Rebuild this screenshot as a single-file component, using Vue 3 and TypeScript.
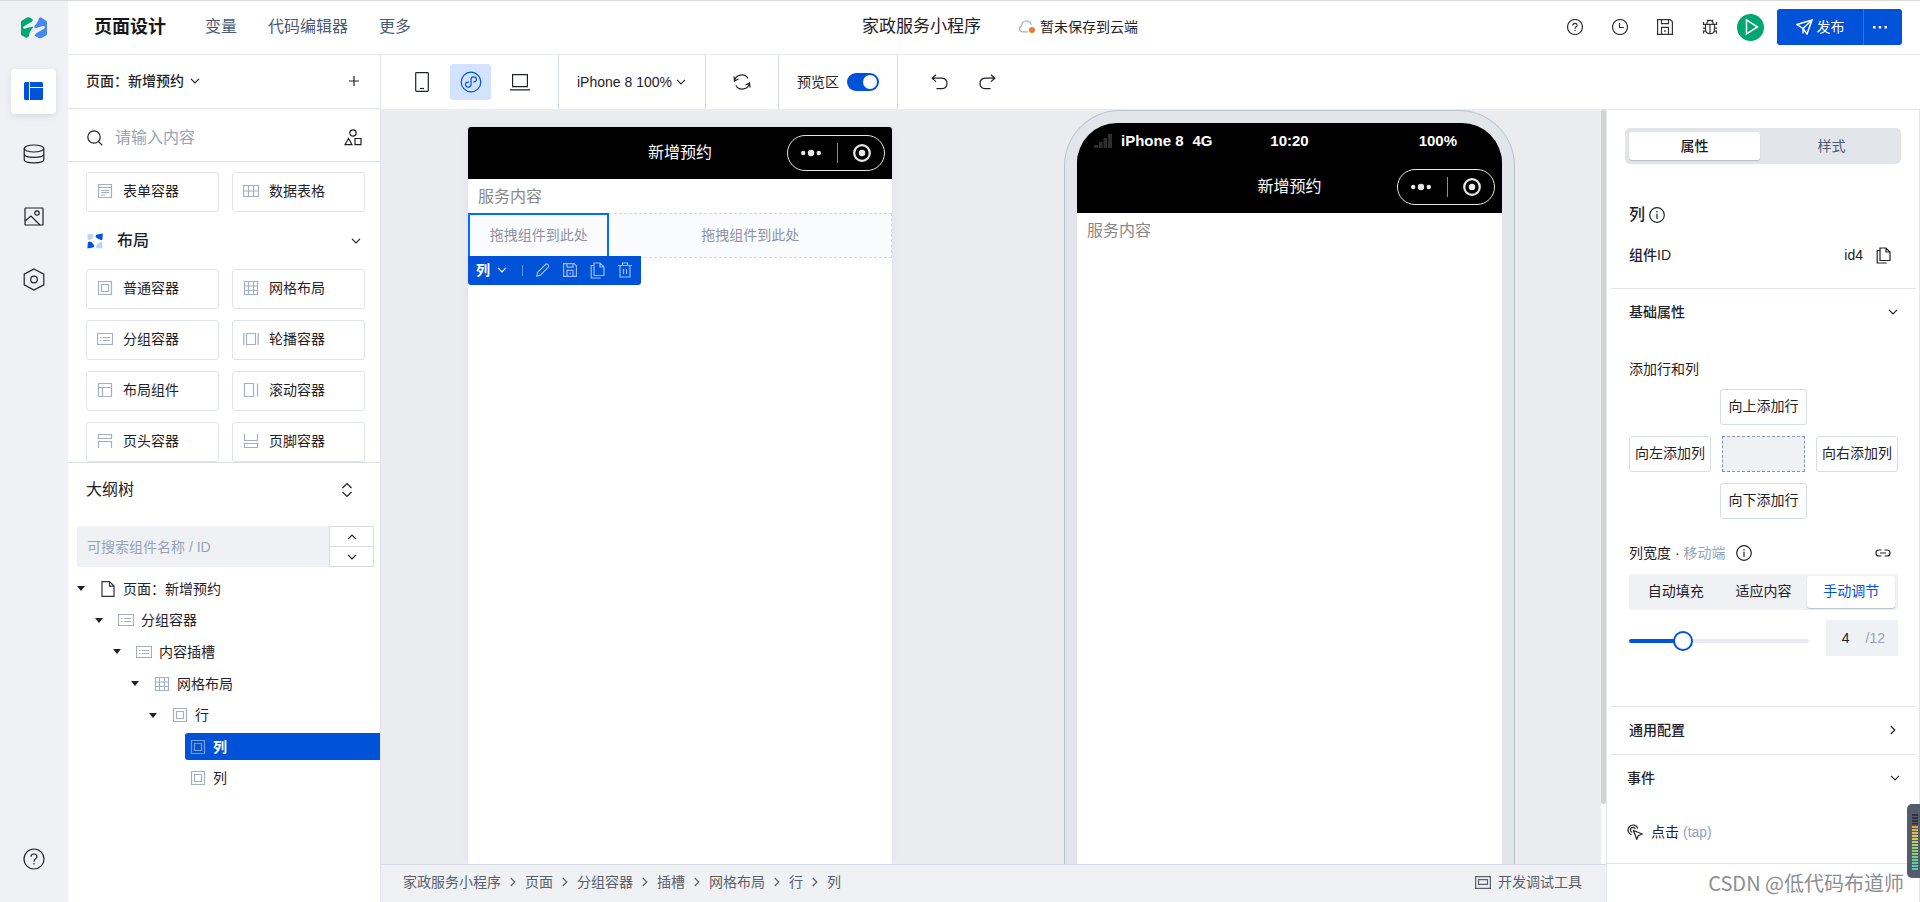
<script setup lang="ts">
import { h, ref } from 'vue'
import type { FunctionalComponent } from 'vue'

type Glyph = [width: number, height: number, body: string]

const glyphs: Record<string, Glyph> = {
  logo: [26, 22, '<g stroke="none"><path fill="#00a870" d="M0 5Q0 4 1 3.500L6 .6Q7.500-.2 9 .6L12 2.700Q12 4 9.500 5.500L3.500 9Q1.500 10.200 2.300 11.200 3.200 12 5 11.300L12 9.500C12.500 11.500 8.500 14 8.500 16.500Q8.500 18.500 6.500 20.600 5.500 21.300 4.500 20.600L1 18.500Q0 18 0 17Z"/><path fill="#4787f0" d="M13.500 9.500C14 7.500 17.500 5 17.500 2.500Q18-.2 20 .4L25 3.500Q26 4 26 5V17Q26 18 25 18.500L20.500 21Q19 21.800 17.500 21L13.500 18.500Q14 17 16.500 15.500L22.500 12Q24.500 10.500 23.700 9.500 22.800 8.500 21 9.300L13.500 11.500Z"/></g>'],
  layout: [19, 18, '<path stroke="none" fill="currentColor" d="M1.500 0H5V18H1.500Q0 18 0 16.500V1.500Q0 0 1.500 0ZM6 0H17.500Q19 0 19 1.500V5H6ZM6 6H19V16.500Q19 18 17.500 18H6Z"/>'],
  database: [22, 20, '<ellipse cx="11" cy="4.500" rx="9.800" ry="3.500"/><path d="M1.200 4.500V15.500C1.200 20 20.800 20 20.800 15.500V4.500M1.200 10C1.200 14.500 20.800 14.500 20.800 10"/>'],
  picture: [20, 19, '<rect x="1" y="1" width="18" height="17" rx=".6"/><circle cx="13" cy="6" r="2.200"/><path d="m1 14 6-5 9 9"/>'],
  hexagon: [22, 23, '<path d="m11 1 9.800 5.200v10.600L11 22 1.200 16.800V6.200Z"/><circle cx="11" cy="11.500" r="3.300"/>'],
  help: [22, 22, '<circle cx="11" cy="11" r="10"/><path d="M8 8.700Q8.200 6 11 6t3 2.600C14 10.700 11 10.700 11 13.500M11 15v1.600"/>'],
  helpSmall: [16, 16, '<circle cx="8" cy="8" r="7.500"/><path d="M5.800 6.500Q6 4.300 8 4.300t2.200 1.900C10.200 7.700 8 7.900 8 9.700M8 10.800v1.200"/>'],
  info: [16, 16, '<circle cx="8" cy="8" r="7.300"/><path d="M8 4v1.600M8 6.800V12"/>'],
  clock: [16, 16, '<circle cx="8" cy="8" r="7.500"/><path d="M7.500 4v4.500H12"/>'],
  save: [16, 16, '<path d="M.6.6h12.600l2.200 2.200v12.600H.6ZM4.500.6v4h7v-4M4.500 15.400v-7h7v7M8 11v2"/>'],
  saveLight: [14, 14, '<path d="M.6.6h10.600l2.200 2.200v10.600H.6ZM4 .6v3.500h6V.6M4 13.400v-6h6v6M7 9.500v2"/>'],
  bug: [16, 16, '<path d="M4.800 5C4.800.2 11.200.2 11.200 5M3.500 5.300h9v5.200q0 4.200-4.500 4.200t-4.500-4.200ZM8 5.500v9M1 9.200h2.500M12.500 9.200H15M1.500 3v2.300h2M14.500 3v2.300h-2M1.500 14.500v-2.300h2.300M14.500 14.500v-2.300h-2.300M5 .8l1 1M11 .8l-1 1"/>'],
  play: [14, 18, '<path stroke-width="1.500" d="M1.500 1.800V16L12.500 9Z"/>'],
  send: [17, 16, '<path stroke-width="1.500" d="M1 5.500 16 1l-5 14-4-5.500ZM16 1 7 9.500v5"/>'],
  dots: [16, 4, '<path stroke="none" fill="currentColor" d="M1 1h2.500v2.500H1ZM6.700 1h2.500v2.500H6.700ZM12.500 1H15v2.500h-2.500Z"/>'],
  cloud: [18, 14, '<path stroke="#a3afc2" stroke-width="1.200" d="M10 11.800H4A3 3 0 0 1 3.500 6Q4 1 8.500 1q4 0 4.800 4"/><circle cx="14" cy="10" r="3" fill="#ed7b2f" stroke="none"/>'],
  phone: [14, 20, '<rect x=".7" y=".7" width="12.600" height="18.600" rx=".8"/><path d="M5 16.500h4"/>'],
  mini: [22, 22, '<circle cx="11" cy="11" r="9.800"/><path d="M9 11.200C6.500 10.700 5.500 12 5.500 13.300 5.500 17.200 11 17 11 13.200V8.500C11 5 16.500 4.800 16.500 8.500 16.500 10.200 15.200 11 13.300 10.800"/>'],
  laptop: [20, 17, '<path d="M2.600.7h14.800v12H2.600ZM0 15.800h20"/>'],
  refresh: [18, 18, '<path d="M1.500 8C2.500 1 12 0 15 5.500M16.500 10C15.500 17 6 18 3 12.500M1 3.500l.5 4.500 4-2M17 14.500l-.5-4.500-4 2"/>'],
  undo: [18, 16, '<path d="M5 .8 1.200 4.200 5 7.600M1.200 4.200H11Q16 4.700 16 9.500 16 14.200 11 14.700H5.500"/>'],
  redo: [18, 16, '<path d="M13 .8l3.800 3.400L13 7.600M16.800 4.200H7Q2 4.700 2 9.500 2 14.200 7 14.700h5.500"/>'],
  down: [10, 6, '<path d="m1 .8 4 4 4-4"/>'],
  up: [10, 6, '<path d="m1 5.200 4-4 4 4"/>'],
  right: [6, 10, '<path d="m.8 1 4 4-4 4"/>'],
  sort: [12, 16, '<path d="m1.500 6 4.500-4.500L10.500 6M1.500 10 6 14.500 10.500 10"/>'],
  plus: [10, 10, '<path d="M5 0v10M0 5h10"/>'],
  search: [16, 16, '<circle cx="7" cy="7" r="6.200"/><path d="m11.500 11.500 3.800 3.800"/>'],
  shapes: [18, 17, '<circle cx="9" cy="4" r="3.200"/><path d="M4.500 9.500 1 15.700h7ZM11 9.500h6v6.200h-6Z"/>'],
  section: [16, 16, '<g stroke="none"><path fill="#bbd3fb" d="M.5 1 6 1.200Q7 1.500 6.500 2.500L5.500 5Q5 6 4 6.500L2 7Q.8 7.300.6 6ZM15.500 15.500 10 15.300Q8.500 15 9 13.800L10.500 11 13.500 8.800Q14.800 8 15 9.500Z"/><path fill="#0052d9" d="M15.800.5 15.500 6Q15.300 7.300 14 7L11.500 6Q9.500 5 8.500 3.500 8.500 2 10 1.500ZM.4 15.500.8 10Q1 8.500 2.500 8.500L4 8.800Q6.500 10.500 7.200 13 7.300 14.300 6 14.500Z"/></g>'],
  form: [16, 16, '<path d="M1.500 1.500h13v13h-13ZM1.500 4.500h13M4 7.500h8M4 9.500h8M4 12h4"/>'],
  table: [16, 16, '<path d="M.5 2.500h15v11H.5ZM.5 8h15M5.500 2.500v11M10.500 2.500v11"/>'],
  box: [16, 16, '<path d="M1.500 1.500h13v13h-13ZM4.500 4.500h7v7h-7Z"/>'],
  grid: [16, 16, '<path d="M1.500 1.500h13v13h-13ZM1.500 6h13M1.500 10.500h13M5.500 1.500v13M10.500 1.500v13"/>'],
  list: [16, 16, '<path d="M.5 2.500h15v11H.5ZM3 6.500h1.500M3 9.500h1.500M6 6.500h7M6 9.500h7"/>'],
  carousel: [16, 16, '<path d="M.8 2v12M15.200 2v12M3.500 2.500h9v11h-9Z"/>'],
  frame: [16, 16, '<path d="M1.500 1.500h13v13h-13ZM1.500 5.500h13M5.500 5.500v9"/>'],
  scroll: [16, 16, '<path d="M1.500 1.500h9v13h-9ZM14.500 1.500v13"/>'],
  header: [16, 16, '<path d="M1.500 1.500h13v4h-13ZM1.500 15V8.500h13V15"/>'],
  footer: [16, 16, '<path d="M1.500 14.500h13v-4h-13ZM1.500 1v6.500h13V1"/>'],
  page: [14, 16, '<path d="M1 .6h7.500l4.500 4.500v10.300H1ZM8.500.6v4.500H13"/>'],
  copy: [15, 17, '<path d="M4 1h6l4 4v8.500H4ZM10 1v4h4M4 3.500H1.200v12.500h9.500"/>'],
  pencil: [14, 14, '<path d="M1.500 9.500 9.500 1.500q1-1 2.200 0l.5.600q1 1 0 2.100L4.500 12.200l-3.700 1Z"/>'],
  trash: [14, 16, '<path d="M0 3.500h14M4.500 3.500v-2.500h5v2.500M2 3.500v11.500h10V3.500M5.500 7v5M8.500 7v5"/>'],
  link: [16, 8, '<path d="M6.500 1H4Q1 1 1 4t3 3h2.500M9.500 1H12q3 0 3 3t-3 3H9.500M5 4h6"/>'],
  tap: [16, 16, '<path d="M4.500 10.800A5 5 0 1 1 10.800 4.500M5.300 8.300A2.500 2.500 0 1 1 8.300 5M6.500 6.500l8.800 3.500-4 1.600L9.800 15.300Z"/>'],
  devtools: [16, 13, '<path d="M.6.6h14.800v11.800H.6ZM3.500 3.600h9v4.800h-9Z"/>'],
  caret: [8, 5, '<path fill="currentColor" stroke="none" d="M0 0h8L4 5Z"/>'],
  more: [20, 8, '<g fill="currentColor" stroke="none"><circle cx="2.200" cy="4" r="2.200"/><circle cx="10" cy="4" r="3.200"/><circle cx="17.800" cy="4" r="2.200"/></g>'],
  target: [18, 18, '<circle cx="9" cy="9" r="7.800" stroke-width="2.200"/><circle cx="9" cy="9" r="3.200" fill="currentColor" stroke="none"/>'],
  signal: [18, 14, '<path stroke="none" fill="#2e2e2e" d="M0 11h4v3H0ZM5 8h3.500v6H5ZM9.500 4H13v10H9.500ZM14 0h4v14h-4Z"/>'],
}

const Icon: FunctionalComponent<{ name: string }> = (props) => {
  const [width, height, body] = glyphs[props.name]
  return h('svg', {
    width,
    height,
    viewBox: `0 0 ${width} ${height}`,
    fill: 'none',
    stroke: 'currentColor',
    'stroke-width': 1.2,
    'aria-hidden': 'true',
    innerHTML: body,
  })
}
Icon.props = ['name']

const rail = [
  { icon: 'layout', label: '页面设计', active: true },
  { icon: 'database', label: '数据' },
  { icon: 'picture', label: '素材' },
  { icon: 'hexagon', label: '设置' },
]
const headerTools = [
  { icon: 'helpSmall', label: '帮助' },
  { icon: 'clock', label: '历史' },
  { icon: 'save', label: '保存' },
  { icon: 'bug', label: '调试' },
]
const dataComponents = [
  { icon: 'form', label: '表单容器' },
  { icon: 'table', label: '数据表格' },
]
const layoutComponents = [
  { icon: 'box', label: '普通容器' },
  { icon: 'grid', label: '网格布局' },
  { icon: 'list', label: '分组容器' },
  { icon: 'carousel', label: '轮播容器' },
  { icon: 'frame', label: '布局组件' },
  { icon: 'scroll', label: '滚动容器' },
  { icon: 'header', label: '页头容器' },
  { icon: 'footer', label: '页脚容器' },
]
const tree = [
  { icon: 'page', label: '页面：新增预约', depth: 0, open: true },
  { icon: 'list', label: '分组容器', depth: 1, open: true },
  { icon: 'list', label: '内容插槽', depth: 2, open: true },
  { icon: 'grid', label: '网格布局', depth: 3, open: true },
  { icon: 'box', label: '行', depth: 4, open: true },
  { icon: 'box', label: '列', depth: 5, selected: true },
  { icon: 'box', label: '列', depth: 5 },
]
const crumbs = ['家政服务小程序', '页面', '分组容器', '插槽', '网格布局', '行', '列']
const devices = [
  { icon: 'phone', label: '手机' },
  { icon: 'mini', label: '小程序', active: true },
  { icon: 'laptop', label: '电脑' },
]
const widthModes = ['自动填充', '适应内容', '手动调节']

const preview = ref(true)
const keyword = ref('')
const outlineKeyword = ref('')
const widthMode = ref('手动调节')
const span = ref(4)
</script>

<template>
  <div class="app">
    <nav class="rail" aria-label="主导航">
      <Icon name="logo" class="logo" />
      <button v-for="r in rail" :key="r.icon" class="rail-btn" :class="{ active: r.active }" :aria-label="r.label">
        <Icon :name="r.icon" />
      </button>
      <button class="rail-btn rail-help" aria-label="帮助"><Icon name="help" /></button>
    </nav>

    <header class="top">
      <div class="top-nav">
        <h1>页面设计</h1>
        <a href="#">变量</a>
        <a href="#">代码编辑器</a>
        <a href="#">更多</a>
      </div>
      <div class="top-center">
        <span class="app-name">家政服务小程序</span>
        <span class="save-state"><Icon name="cloud" />暂未保存到云端</span>
      </div>
      <div class="top-tools">
        <button v-for="t in headerTools" :key="t.icon" class="tool" :aria-label="t.label"><Icon :name="t.icon" /></button>
        <button class="run" aria-label="预览"><Icon name="play" /></button>
        <div class="publish">
          <button class="publish-main"><Icon name="send" />发布</button>
          <button class="publish-more" aria-label="更多操作"><Icon name="dots" /></button>
        </div>
      </div>
    </header>

    <aside class="left">
      <div class="page-row">
        <label class="picker strong">
          <select aria-label="页面"><option>页面：新增预约</option></select>
          <Icon name="down" />
        </label>
        <button aria-label="新增页面"><Icon name="plus" /></button>
      </div>
      <div class="search-row">
        <Icon name="search" />
        <input v-model="keyword" type="text" placeholder="请输入内容" aria-label="搜索组件" />
        <button aria-label="组件分类"><Icon name="shapes" /></button>
      </div>
      <div class="library">
        <div class="cards">
          <button v-for="c in dataComponents" :key="c.label" class="card"><Icon :name="c.icon" />{{ c.label }}</button>
        </div>
        <h2 class="group-head"><Icon name="section" /><span>布局</span><Icon name="down" /></h2>
        <div class="cards">
          <button v-for="c in layoutComponents" :key="c.label" class="card"><Icon :name="c.icon" />{{ c.label }}</button>
        </div>
      </div>
      <section class="outline">
        <div class="outline-head">
          <h2>大纲树</h2>
          <button aria-label="展开收起"><Icon name="sort" /></button>
        </div>
        <div class="outline-search">
          <input v-model="outlineKeyword" type="text" placeholder="可搜索组件名称 / ID" aria-label="搜索大纲" />
          <div class="stepper">
            <button aria-label="上一个"><Icon name="up" /></button>
            <button aria-label="下一个"><Icon name="down" /></button>
          </div>
        </div>
        <ul class="tree" role="tree">
          <li
            v-for="(n, i) in tree"
            :key="i"
            role="treeitem"
            :aria-selected="!!n.selected"
            :style="{ paddingLeft: `${n.depth * 18}px` }"
          >
            <Icon v-if="n.open" name="caret" class="caret" />
            <span v-else class="caret"></span>
            <span class="node" :class="{ selected: n.selected, root: n.depth === 0 }"><Icon :name="n.icon" />{{ n.label }}</span>
          </li>
        </ul>
      </section>
    </aside>

    <div class="toolbar">
      <div class="bar-group devices">
        <button v-for="d in devices" :key="d.icon" class="device" :class="{ active: d.active }" :aria-label="d.label">
          <Icon :name="d.icon" />
        </button>
      </div>
      <div class="bar-group">
        <label class="picker">
          <select aria-label="机型"><option>iPhone 8 100%</option></select>
          <Icon name="down" />
        </label>
      </div>
      <div class="bar-group refresh"><button aria-label="刷新"><Icon name="refresh" /></button></div>
      <div class="bar-group">
        <label class="switch">预览区<input v-model="preview" type="checkbox" role="switch" /></label>
      </div>
      <div class="bar-group history">
        <button aria-label="撤销"><Icon name="undo" /></button>
        <button aria-label="重做"><Icon name="redo" /></button>
      </div>
    </div>

    <main class="canvas">
      <div class="stage">
        <div class="editor">
          <div class="nav-bar">
            <span>新增预约</span>
            <div class="capsule"><Icon name="more" /><i></i><Icon name="target" /></div>
          </div>
          <p class="content-label">服务内容</p>
          <div class="slots">
            <div class="slot current">
              拖拽组件到此处
              <div class="slot-tools">
                <button class="slot-name">列<Icon name="down" /></button>
                <i></i>
                <button aria-label="编辑"><Icon name="pencil" /></button>
                <button aria-label="保存"><Icon name="saveLight" /></button>
                <button aria-label="复制"><Icon name="copy" /></button>
                <button aria-label="删除"><Icon name="trash" /></button>
              </div>
            </div>
            <div class="slot">拖拽组件到此处</div>
          </div>
        </div>
        <div class="device-frame">
          <div class="screen">
            <div class="screen-head">
              <div class="status">
                <span class="carrier"><Icon name="signal" /><b>iPhone 8</b><b>4G</b></span>
                <b>10:20</b>
                <b class="battery">100%</b>
              </div>
              <div class="nav-bar">
                <span>新增预约</span>
                <div class="capsule"><Icon name="more" /><i></i><Icon name="target" /></div>
              </div>
            </div>
            <p class="content-label">服务内容</p>
          </div>
        </div>
      </div>
      <div class="track"><div class="thumb"></div></div>
    </main>

    <footer class="status-bar">
      <nav class="crumbs" aria-label="层级">
        <template v-for="(c, i) in crumbs" :key="i">
          <Icon v-if="i" name="right" />
          <a href="#">{{ c }}</a>
        </template>
      </nav>
      <button class="devtools"><Icon name="devtools" />开发调试工具</button>
    </footer>

    <aside class="right">
      <div class="props">
        <div class="tabs" role="tablist">
          <button role="tab" aria-selected="true" class="active">属性</button>
          <button role="tab" aria-selected="false">样式</button>
        </div>
        <h2 class="comp-name">列<Icon name="info" /></h2>
        <div class="id-row">
          <strong>组件ID</strong>
          <span>id4</span>
          <button aria-label="复制ID"><Icon name="copy" /></button>
        </div>
        <section class="basic">
          <h3 class="fold"><span>基础属性</span><Icon name="down" /></h3>
          <h4 class="field-title">添加行和列</h4>
          <div class="adder">
            <button class="add-up">向上添加行</button>
            <button class="add-left">向左添加列</button>
            <div class="add-center"></div>
            <button class="add-right">向右添加列</button>
            <button class="add-down">向下添加行</button>
          </div>
          <div class="width-title">
            <span>列宽度 · <em>移动端</em></span>
            <Icon name="info" />
            <button aria-label="绑定"><Icon name="link" /></button>
          </div>
          <div class="segment">
            <button v-for="m in widthModes" :key="m" :class="{ active: m === widthMode }" @click="widthMode = m">{{ m }}</button>
          </div>
          <div class="slider-row">
            <input v-model.number="span" class="slider" type="range" min="1" max="12" aria-label="列宽" :style="{ '--fill': `${((span - 1) / 11) * 100}%` }" />
            <label class="span-box">
              <input v-model.number="span" type="text" aria-label="列宽数值" />
              <span>/12</span>
            </label>
          </div>
        </section>
        <section class="common"><h3 class="fold"><span>通用配置</span><Icon name="right" /></h3></section>
        <section class="events">
          <h3 class="fold"><span>事件</span><Icon name="down" /></h3>
          <button class="event"><Icon name="tap" />点击 <em>(tap)</em></button>
        </section>
      </div>
      <div class="right-foot"></div>
    </aside>

    <div class="meter" aria-hidden="true"><i></i></div>
    <div class="watermark">CSDN @低代码布道师</div>
  </div>
</template>

<style>
body {
  margin: 0;
}
</style>

<style scoped>
.app {
  display: grid;
  grid-template: 55px 54px minmax(0, 1fr) 38px / 68px 313px minmax(0, 1fr) 314px;
  grid-template-areas:
    'rail top top top'
    'rail left bar bar'
    'rail left canvas right'
    'rail left foot right';
  box-sizing: border-box;
  height: 100vh;
  position: relative;
  overflow: hidden;
  background: #fff;
  color: #1f2228;
  font: 14px/24px 'Liberation Sans', 'Noto Sans CJK SC', sans-serif;
}
.app * {
  box-sizing: border-box;
}
.app::before {
  content: '';
  position: absolute;
  inset: 0 0 auto;
  height: 1px;
  background: #d9dadc;
}
svg {
  flex: none;
  display: block;
}
button {
  display: flex;
  align-items: center;
  justify-content: center;
  margin: 0;
  padding: 0;
  border: 0;
  background: none;
  color: inherit;
  font: inherit;
  cursor: pointer;
}
input,
select {
  margin: 0;
  border: 0;
  padding: 0;
  outline: 0;
  background: none;
  color: inherit;
  font: inherit;
  appearance: none;
}
h1, h2, h3, h4, p, ul {
  margin: 0;
  padding: 0;
  font-weight: 400;
  font-size: inherit;
}
a {
  color: inherit;
  text-decoration: none;
}
em {
  font-style: normal;
  color: #97a3b7;
}

.rail {
  grid-area: rail;
  display: flex;
  flex-direction: column;
  align-items: center;
  gap: 18px;
  background: #eff1f5;
  padding: 17px 1px 20px 0;
}
.logo {
  margin-bottom: 12px;
}
.rail-btn {
  width: 45px;
  height: 45px;
  padding-bottom: 2px;
  border-radius: 4px;
}
.rail-btn.active {
  background: #fff;
  color: #0052d9;
  box-shadow: 0 2px 6px #0000001a;
}
.rail-help {
  margin-top: auto;
}

.top {
  grid-area: top;
  display: grid;
  grid-template-columns: 1fr auto 1fr;
  align-items: center;
  padding: 0 18px 0 26px;
  border-bottom: 1px solid #e6e8ee;
}
.top-nav {
  display: flex;
  align-items: center;
  gap: 31px;
  font-size: 16px;
  color: #4b5b76;
}
.top-nav h1 {
  margin-right: 8px;
  font-size: 18px;
  font-weight: 700;
  color: #16181d;
}
.top-center {
  display: flex;
  align-items: center;
  gap: 37px;
  padding-left: 4px;
}
.app-name {
  font-size: 17px;
}
.save-state {
  display: flex;
  align-items: center;
  gap: 4px;
}
.top-tools {
  display: flex;
  align-items: center;
  justify-content: flex-end;
}
.tool {
  margin-right: 29px;
  color: #333;
}
.tool:nth-of-type(4) {
  margin-right: 19px;
}
.run {
  width: 27px;
  height: 27px;
  padding-left: 3px;
  margin-right: 13px;
  border-radius: 50%;
  background: #00a870;
  color: #fff;
}
.publish {
  display: flex;
  height: 36px;
  border-radius: 3px;
  background: #0052d9;
  color: #fff;
}
.publish-main {
  gap: 4px;
  width: 86px;
}
.publish-more {
  width: 39px;
  padding-right: 6px;
  border-left: 1px solid #2f72e3;
}

.left {
  grid-area: left;
  display: flex;
  flex-direction: column;
  min-height: 0;
  border-right: 1px solid #e0e3e9;
}
.page-row {
  display: flex;
  align-items: center;
  justify-content: space-between;
  flex: none;
  height: 54px;
  padding: 0 21px 2px 18px;
  border-bottom: 1px solid #e3e6eb;
}
.picker {
  display: flex;
  align-items: center;
  gap: 7px;
}
.strong {
  font-weight: 500;
  gap: 6px;
}
.search-row {
  display: flex;
  align-items: center;
  flex: none;
  gap: 12px;
  height: 53px;
  padding: 5px 18px 0 19px;
  border-bottom: 1px solid #dfe2e7;
}
.search-row input {
  flex: 1;
  min-width: 0;
  font-size: 16px;
}
::placeholder {
  color: #97a3b7;
  opacity: 1;
}
.library {
  flex: none;
  padding: 10px 15px 0 18px;
  border-bottom: 1px solid #dcdfe4;
}
.cards {
  display: grid;
  grid-template-columns: 1fr 1fr;
  gap: 11px 13px;
}
.card {
  justify-content: flex-start;
  gap: 10px;
  height: 40px;
  padding: 0 10px 2px;
  border: 1px solid #e1e4ea;
  border-radius: 3px;
}
.card svg,
.node svg {
  color: #a3afc2;
}
.group-head {
  display: flex;
  align-items: center;
  gap: 14px;
  height: 57px;
  padding: 0 4px 0 1px;
  font-size: 16px;
  font-weight: 500;
}
.group-head span {
  flex: 1;
}
.outline {
  flex: 1;
  min-height: 0;
}
.outline-head {
  display: flex;
  align-items: center;
  justify-content: space-between;
  height: 54px;
  padding: 0 27px 0 18px;
}
.outline-head h2 {
  font-size: 16px;
}
.outline-search {
  display: flex;
  height: 41px;
  margin: 9px 6px 0 9px;
}
.outline-search input {
  flex: 1;
  min-width: 0;
  padding: 0 10px;
  border-radius: 3px 0 0 3px;
  background: #eff1f5;
}
.stepper {
  display: grid;
  width: 45px;
  border: 1px solid #dcdcdc;
}
.stepper button + button {
  border-top: 1px solid #dcdcdc;
}
.tree {
  display: flex;
  flex-direction: column;
  height: 221px;
  margin: 6px 0 0 9px;
  list-style: none;
}
.tree li {
  display: flex;
  align-items: center;
  flex: 1;
}
.caret {
  width: 8px;
  margin-right: 10px;
}
.node {
  display: flex;
  align-items: center;
  flex: 1;
  gap: 7px;
  height: 27px;
  padding: 0 5px;
  border-radius: 3px 0 0 3px;
}
.node.root {
  padding-left: 6px;
  gap: 8px;
}
.node.root svg {
  color: #333;
}
.node.selected {
  background: #0052d9;
  color: #fff;
  font-weight: 700;
}
.node.selected svg {
  color: #7f9bcb;
}

.toolbar {
  grid-area: bar;
  display: flex;
  align-items: stretch;
}
.bar-group {
  display: flex;
  align-items: center;
  padding: 0 18px;
  border-right: 1px solid #d8dce6;
}
.devices {
  gap: 8px;
  padding: 0 18px 0 20px;
}
.device {
  width: 41px;
  height: 36px;
  border-radius: 3px;
}
.device.active {
  background: #d3e3fd;
  color: #0052d9;
}
.bar-group .picker {
  gap: 4px;
  width: 110px;
}
.refresh {
  padding: 0 27px;
}
.switch {
  display: flex;
  align-items: center;
  gap: 8px;
}
.switch input {
  display: flex;
  justify-content: flex-start;
  width: 32px;
  height: 18px;
  padding: 2px;
  border-radius: 9px;
  background: #b5bccb;
}
.switch input:checked {
  justify-content: flex-end;
  background: #0052d9;
}
.switch input::before {
  content: '';
  width: 14px;
  height: 14px;
  border-radius: 50%;
  background: #fff;
}
.history {
  gap: 29px;
  padding: 0 33px;
  border: 0;
}

.canvas {
  grid-area: canvas;
  display: flex;
  min-height: 0;
}
.stage {
  display: flex;
  flex: 1;
  justify-content: space-around;
  padding-left: 1px;
  background: #ebecf0;
  overflow: hidden;
}
.track {
  width: 5px;
}
.thumb {
  height: 92%;
  border-radius: 3px;
  background: #d3d3d3;
}
.editor {
  width: 424px;
  margin-top: 18px;
  border-radius: 3px 3px 0 0;
  background: #fff;
  box-shadow: 0 0 6px #0000000f;
}
.nav-bar {
  display: grid;
  grid-template-columns: 1fr auto 1fr;
  align-items: center;
  height: 52px;
  padding: 0 7px;
  border-radius: 3px 3px 0 0;
  background: #000;
  color: #fff;
  font-size: 16px;
}
.nav-bar > span {
  grid-column: 2;
}
.capsule {
  display: flex;
  align-items: center;
  justify-content: space-between;
  justify-self: end;
  width: 98px;
  height: 36px;
  padding: 0 13px;
  border: 1px solid #e6e6e6;
  border-radius: 18px;
  color: #e9e9e9;
}
.capsule i {
  width: 1px;
  height: 20px;
  background: #8c8c8c;
}
.content-label {
  height: 34px;
  padding: 6px 10px 0;
  color: #888;
  font-size: 16px;
}
.slots {
  display: grid;
  grid-template-columns: 1fr 2fr;
}
.slot {
  display: flex;
  align-items: center;
  justify-content: center;
  height: 45px;
  padding-bottom: 1px;
  border: 1px dashed #d5d8dd;
  border-left: 0;
  background: #fafbfd;
  color: #8a94a6;
}
.slot.current {
  position: relative;
  border: 2px solid #006eff;
}
.slot-tools {
  position: absolute;
  left: -2px;
  top: 41px;
  display: flex;
  align-items: center;
  gap: 13px;
  height: 29px;
  padding: 0 9px 1px 8px;
  border-radius: 0 0 3px 3px;
  background: #0052d9;
  color: #9cbcf2;
}
.slot-tools i {
  width: 1px;
  height: 11px;
  margin-left: 2px;
  background: #5c90e8;
}
.slot-name {
  gap: 7px;
  color: #fff;
  font-weight: 700;
}
.device-frame {
  width: 451px;
  margin-top: 1px;
  padding: 12px 12px 0;
  border: 1px solid #b9c3d0;
  border-bottom: 0;
  border-radius: 56px 56px 0 0;
  background: #e2e5ea;
}
.screen {
  height: 100%;
  overflow: hidden;
  border-radius: 40px 40px 0 0;
  background: #fff;
}
.screen-head {
  padding-top: 6px;
  background: #000;
  color: #fff;
}
.status {
  display: grid;
  grid-template-columns: 1fr auto 1fr;
  align-items: center;
  padding: 0 17px;
  font-size: 15px;
}
.carrier {
  display: flex;
  align-items: center;
  gap: 9px;
}
.battery {
  justify-self: end;
  margin-right: 28px;
}
.screen-head .nav-bar {
  height: 60px;
  padding-top: 7px;
}

.status-bar {
  grid-area: foot;
  display: flex;
  align-items: center;
  justify-content: space-between;
  padding: 0 24px 3px 22px;
  border-top: 1px solid #d5dae3;
  background: #eff1f5;
  color: #5a5f69;
}
.crumbs {
  display: flex;
  align-items: center;
  gap: 9px;
}
.devtools {
  gap: 7px;
}

.right {
  grid-area: right;
  display: flex;
  flex-direction: column;
  min-height: 0;
  border: 1px solid #e3e6eb;
  border-bottom: 0;
}
.props {
  flex: 1;
  min-height: 0;
  overflow: hidden;
}
.right-foot {
  height: 39px;
  border-top: 1px solid #e3e6eb;
}
.tabs {
  display: grid;
  grid-template-columns: 131px 1fr;
  height: 36px;
  margin: 18px 18px 0;
  padding: 4px;
  border-radius: 5px;
  background: #e2e5ea;
  color: #4b5b76;
}
.tabs button {
  padding: 0 0 1px 6px;
}
.tabs .active {
  padding-left: 0;
  border-radius: 3px;
  background: #fff;
  color: #16181d;
  font-weight: 500;
  box-shadow: 0 1px 1px #0000002e;
}
.comp-name {
  display: flex;
  align-items: center;
  gap: 4px;
  margin: 39px 22px 0;
  font-size: 16px;
  font-weight: 500;
}
.id-row {
  display: flex;
  align-items: center;
  margin: 16px 28px 21px 22px;
}
.id-row strong {
  flex: 1;
  font-weight: 500;
}
.id-row span {
  margin-right: 13px;
}
.basic,
.common,
.events {
  margin: 0 3px 0 4px;
  padding: 0 18px;
  border-top: 1px solid #e3e6eb;
}
.fold {
  display: flex;
  align-items: center;
  justify-content: space-between;
  height: 47px;
  padding-bottom: 2px;
  font-weight: 500;
}
.common svg {
  margin-right: 2px;
}
.field-title {
  margin-top: 21px;
}
.adder {
  display: grid;
  grid-template: repeat(3, 36px) / 82px 1fr 82px;
  grid-template-areas: '. up .' 'left mid right' '. down .';
  gap: 11px 9px;
  margin-top: 8px;
}
.adder button {
  padding-bottom: 2px;
  border: 1px solid #d8dce6;
  border-radius: 3px;
}
.add-up { grid-area: up; }
.add-left { grid-area: left; }
.add-right { grid-area: right; }
.add-down { grid-area: down; }
.add-center {
  grid-area: mid;
  margin: 0 2px;
  border: 1px dashed #8796b0;
  background: #eff1f5;
}
.width-title {
  display: flex;
  align-items: center;
  gap: 11px;
  margin: 22px 7px 9px 0;
}
.width-title button {
  margin-left: auto;
}
.segment {
  display: grid;
  grid-template-columns: repeat(3, 1fr);
  height: 36px;
  padding: 2px 3px;
  border-radius: 3px;
  background: #eff1f5;
}
.segment button {
  padding-bottom: 3px;
}
.segment .active {
  border-radius: 3px;
  background: #fff;
  color: #0052d9;
  box-shadow: 0 1px 1px #00285a3d;
}
.slider-row {
  display: flex;
  align-items: center;
  justify-content: space-between;
  height: 36px;
  margin: 10px 0 50px;
}
.slider {
  width: 180px;
  height: 20px;
  margin-top: 6px;
}
.slider::-webkit-slider-runnable-track {
  height: 4px;
  border-radius: 2px;
  background: linear-gradient(90deg, #0052d9 var(--fill), #e7e9ef var(--fill));
}
.slider::-webkit-slider-thumb {
  appearance: none;
  width: 20px;
  height: 20px;
  margin-top: -8px;
  border: 2px solid #0052d9;
  border-radius: 50%;
  background: #fff;
}
.span-box {
  display: flex;
  align-items: center;
  width: 72px;
  height: 36px;
  padding: 0 13px 0 0;
  background: #eff1f5;
}
.span-box input {
  flex: 1;
  min-width: 0;
  text-align: center;
}
.span-box span {
  color: #97a3b7;
}
.events {
  padding: 0 16px;
}
.event {
  gap: 4px;
  margin-top: 18px;
}
.event svg {
  margin-right: 4px;
}

.meter {
  position: absolute;
  right: 0;
  bottom: 24px;
  width: 13px;
  height: 74px;
  padding: 9px 2px 8px 5px;
  border-radius: 5px 0 0 5px;
  background: #565b6c;
}
.meter i {
  display: block;
  height: 100%;
  background:
    repeating-linear-gradient(#565b6c 0 1px, transparent 1px 3px),
    linear-gradient(#30333d 0 20%, #e0a040 21%, #d8cf4c 42%, #8fcf6c 65%, #3fd0b8);
}
.watermark {
  position: absolute;
  right: 16px;
  bottom: 7px;
  color: #8d8f93;
  font-family: 'Noto Sans CJK SC', sans-serif;
  font-size: 20px;
}
</style>
